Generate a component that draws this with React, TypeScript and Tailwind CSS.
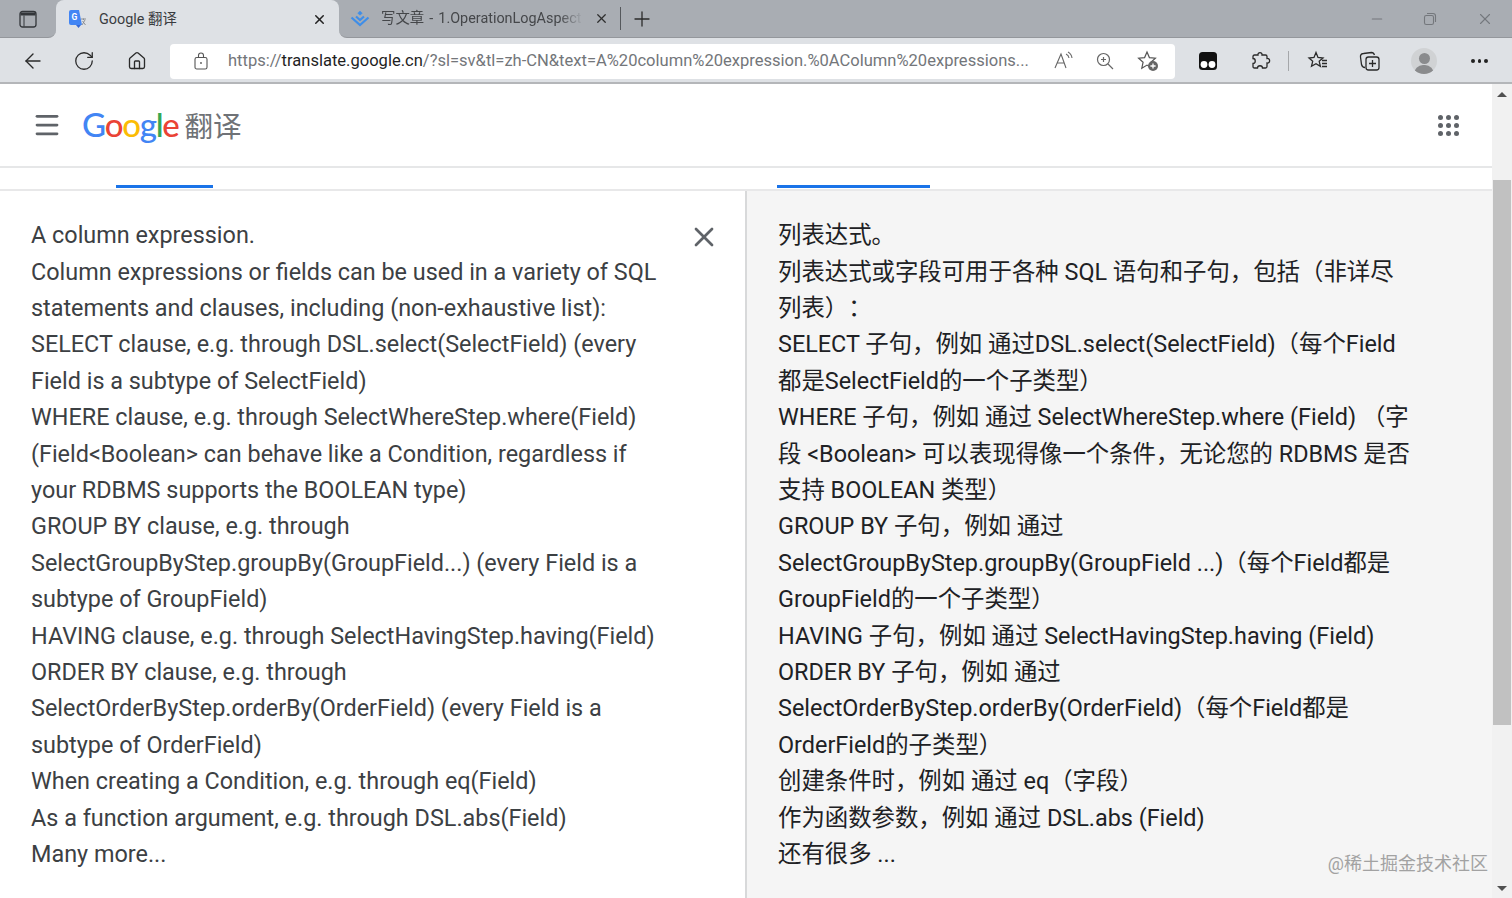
import { ArrowLeft, RotateCw, Home, X, Plus, Minus, Menu } from 'lucide-react';

const sourceLines = [
    'A column expression.',
    'Column expressions or fields can be used in a variety of SQL',
    'statements and clauses, including (non-exhaustive list):',
    'SELECT clause, e.g. through DSL.select(SelectField) (every',
    'Field is a subtype of SelectField)',
    'WHERE clause, e.g. through SelectWhereStep.where(Field)',
    '(Field<Boolean> can behave like a Condition, regardless if',
    'your RDBMS supports the BOOLEAN type)',
    'GROUP BY clause, e.g. through',
    'SelectGroupByStep.groupBy(GroupField...) (every Field is a',
    'subtype of GroupField)',
    'HAVING clause, e.g. through SelectHavingStep.having(Field)',
    'ORDER BY clause, e.g. through',
    'SelectOrderByStep.orderBy(OrderField) (every Field is a',
    'subtype of OrderField)',
    'When creating a Condition, e.g. through eq(Field)',
    'As a function argument, e.g. through DSL.abs(Field)',
    'Many more...',
];

const targetLines = [
    '列表达式。',
    '列表达式或字段可用于各种 SQL 语句和子句，包括（非详尽',
    '列表）：',
    'SELECT 子句，例如 通过DSL.select(SelectField)（每个Field',
    '都是SelectField的一个子类型）',
    'WHERE 子句，例如 通过 SelectWhereStep.where (Field) （字',
    '段 <Boolean> 可以表现得像一个条件，无论您的 RDBMS 是否',
    '支持 BOOLEAN 类型）',
    'GROUP BY 子句，例如 通过',
    'SelectGroupByStep.groupBy(GroupField ...)（每个Field都是',
    'GroupField的一个子类型）',
    'HAVING 子句，例如 通过 SelectHavingStep.having (Field)',
    'ORDER BY 子句，例如 通过',
    'SelectOrderByStep.orderBy(OrderField)（每个Field都是',
    'OrderField的子类型）',
    '创建条件时，例如 通过 eq（字段）',
    '作为函数参数，例如 通过 DSL.abs (Field)',
    '还有很多 ...',
];

function TabStrip() {
    return (
        <div className="flex h-[38px] bg-[#dee1e5] shrink-0">
            <div className="flex h-full w-[56px] items-center justify-center rounded-br-lg border-b border-[#94979c] bg-[#a9adb3]">
                <svg width="18" height="18" viewBox="0 0 18 18" fill="none" stroke="#33363a" strokeWidth="1.300">
                    <rect x="1" y="1.500" width="16" height="15.500" rx="2.500" />
                    <path d="M1.500 4h15" strokeWidth="3" />
                    <path d="M5 5.500v11" strokeWidth="1" />
                </svg>
            </div>

            {/* Active tab */}
            <div className="h-full w-[283px] bg-[#a9adb3]">
                <div className="flex h-full items-center rounded-t-lg bg-[#dee1e5] pl-[13px] pr-[12px] pt-px">
                    <svg width="18" height="20" viewBox="0 0 18 20" className="shrink-0">
                        <path d="M0 2a2 2 0 0 1 2-2h8l3 15H2a2 2 0 0 1-2-2z" fill="#4285f4" />
                        <path d="M7 15h5l-2.500 3z" fill="#3367d6" />
                        <text x="2.500" y="10" fontSize="8.500" fontWeight="700" fill="#fff">G</text>
                        <path d="M12 9h5M14.500 8.500v1.500M13 15l3-5M13.500 11l3 4" stroke="#85888d" strokeWidth="0.900" fill="none" />
                    </svg>
                    <span className="ml-[12px] text-[14.400px] text-[#3a3c3f]">Google 翻译</span>
                    <X size={15} strokeWidth={2.400} className="ml-auto text-[#222]" />
                </div>
            </div>

            {/* Inactive tab */}
            <div className="flex h-full flex-1 items-center rounded-bl-lg border-b border-[#94979c] bg-[#a9adb3]">
                <div className="flex w-[281px] items-center pl-[11px] pr-[11px] pt-px">
                    <svg width="20" height="18" viewBox="0 0 20 18" fill="none" stroke="#3f8ee8" strokeWidth="2.200" className="shrink-0">
                        <path d="M1.500 7.500L10 15l8.500-7.500" />
                        <path d="M6 6.500l4 3.500 4-3.500" />
                        <path d="M10 1l2.300 2.200L10 5.200 7.700 3.200z" fill="#3f8ee8" strokeWidth="0.500" />
                    </svg>
                    <span className="ml-[11px] w-[202px] overflow-hidden whitespace-nowrap text-[14.400px] text-[#45474a] [word-spacing:1.500px] [mask-image:linear-gradient(to_right,black_88%,transparent)]">写文章 - 1.OperationLogAspect</span>
                    <X size={15} strokeWidth={2} className="ml-auto text-[#2e2e2e]" />
                </div>
                <div className="h-[23px] w-px bg-[#55585c]" />
                <div className="flex w-[42px] items-center justify-center">
                    <Plus size={24} strokeWidth={1.300} className="text-[#2b2b2b]" />
                </div>

                {/* Window controls */}
                <div className="ml-auto flex items-center text-[#74777c]">
                    <Minus size={16} strokeWidth={1.800} className="mr-[38px]" />
                    <svg width="14" height="14" viewBox="0 0 14 14" fill="none" stroke="#74777c" strokeWidth="1.100" className="mr-[39px]">
                        <rect x="1.500" y="3.500" width="9" height="9" rx="1.800" />
                        <path d="M4 1.500h6a2.500 2.500 0 0 1 2.500 2.500v6" />
                    </svg>
                    <X size={18} strokeWidth={1.500} className="mr-[18px]" />
                </div>
            </div>
        </div>
    );
}

function Toolbar() {
    return (
        <div className="flex h-[46px] items-center border-b-2 border-[#b4b6b9] bg-[#dee1e5] pt-[2px] shrink-0">
            <div className="flex w-[170px] items-center text-[#2a2a2a]">
                <ArrowLeft size={24} strokeWidth={1.400} className="ml-[21px]" />
                <RotateCw size={22} strokeWidth={1.400} className="ml-[28px]" />
                <Home size={20} strokeWidth={1.600} className="ml-[32px]" />
            </div>
            <div className="flex h-[35px] w-[1005px] items-center rounded bg-white pl-[24px] pr-[16px]">
                <svg width="14" height="18" viewBox="0 0 14 18" fill="none" stroke="#555" strokeWidth="1.100" className="shrink-0">
                    <rect x="1" y="5.500" width="12" height="11.500" rx="1.800" />
                    <path d="M4.500 5.500V3.500a2.500 2.500 0 0 1 5 0v2" />
                    <circle cx="7" cy="11" r="0.900" fill="#555" stroke="none" />
                </svg>
                <span className="ml-[20px] w-[806px] overflow-hidden whitespace-nowrap text-[16.550px] text-[#73767a]">
                    https://<span className="text-[#1f1f1f]">translate.google.cn</span>/?sl=sv&amp;tl=zh-CN&amp;text=A%20column%20expression.%0AColumn%20expressions...
                </span>
                <span className="ml-auto flex items-center text-[#555]">
                    <svg width="20" height="20" viewBox="0 0 20 20" fill="none" stroke="#666" strokeWidth="1.100">
                        <path d="M1 17L7 3l5 14M3.500 12h7" />
                        <path d="M12 3a5 5 0 0 1 3 4M14 1a8 8 0 0 1 4 6" />
                    </svg>
                    <svg width="18" height="18" viewBox="0 0 18 18" fill="none" stroke="#666" strokeWidth="1.200" className="ml-[22px]">
                        <circle cx="7.500" cy="7.500" r="6" />
                        <path d="M12 12l5 5M7.500 5v5M5 7.500h5" />
                    </svg>
                    <svg width="22" height="22" viewBox="0 0 22 22" className="ml-[23px]">
                        <path d="M10 2l2.400 5.600 6 .6-4.500 4 1.300 6-5.200-3.100-5.200 3.100 1.300-6-4.500-4 6-.6z" fill="none" stroke="#555" strokeWidth="1.200" />
                        <circle cx="16" cy="16" r="5" fill="#666" />
                        <path d="M16 13.400v5.200M13.400 16h5.200" stroke="#fff" strokeWidth="1.300" />
                    </svg>
                </span>
            </div>
            <div className="flex flex-1 items-center">
                <svg width="20" height="20" viewBox="0 0 20 20" className="ml-[23px]">
                    <rect x="1" y="1" width="18" height="18" rx="3.500" fill="#111" />
                    <circle cx="6" cy="13.500" r="3.400" fill="#fff" />
                    <circle cx="14" cy="13.500" r="3.400" fill="#fff" />
                </svg>
                <svg width="22" height="22" viewBox="0 0 22 22" fill="none" stroke="#2a2a2a" strokeWidth="1.300" className="ml-[31px]">
                    <path d="M9 5C8.500 1.800 13.500 1.800 13 5L16.500 5Q18 5 18 6.500L18 8.500C21.500 8 21.500 13.500 18 13L18 16.500Q18 18 16.500 18L13.500 18C13.500 15 8.500 15 8.500 18L5.500 18Q4 18 4 16.500L4 13.500C7 13.500 7 8.500 4 8.500L4 6.500Q4 5 5.500 5Z" />
                </svg>
                <div className="ml-[17px] h-[20px] w-px bg-[#a5a7aa]" />
                <svg width="22" height="22" viewBox="0 0 22 22" fill="none" stroke="#2a2a2a" strokeWidth="1.300" className="ml-[18px]">
                    <path d="M9 2.500l2 5 5 .5-3.800 3.300 1.200 5-4.400-2.600L4.500 16.300l1.200-5L2 8l5-.5z" />
                    <path d="M15 10.500h5M15 13.500h5M15 16.500h5" />
                </svg>
                <svg width="22" height="22" viewBox="0 0 22 22" fill="none" stroke="#2a2a2a" strokeWidth="1.300" className="ml-[30px]">
                    <path d="M6 17.500c-2 0-3-1-3.500-3L1.500 7c-.3-2 1-3.500 3-3.500l8-1c1.500 0 2.500 1 3 2.500" />
                    <rect x="7" y="7" width="13" height="13" rx="2.500" />
                    <path d="M13.500 10v7M10 13.500h7" />
                </svg>
                <div className="ml-[30px] flex h-[26px] w-[26px] flex-col items-center justify-end overflow-hidden rounded-full bg-[#d0d2d4]">
                    <div className="h-[11px] w-[11px] rounded-full bg-[#8a8b8d]" />
                    <div className="mt-[1px] h-[9px] w-[20px] rounded-t-full bg-[#8a8b8d]" />
                </div>
                <div className="ml-[34px] flex gap-[3px]">
                    <div className="h-[3.500px] w-[3.500px] rounded-full bg-[#222]" />
                    <div className="h-[3.500px] w-[3.500px] rounded-full bg-[#222]" />
                    <div className="h-[3.500px] w-[3.500px] rounded-full bg-[#222]" />
                </div>
            </div>
        </div>
    );
}

function PageHeader() {
    return (
        <div className="flex h-[84px] items-center border-b-2 border-[#e6e7e8] bg-white shrink-0">
            <Menu size={30} strokeWidth={2.200} className="ml-[32px] text-[#5f6368]" />
            <div className="mb-[2px] ml-[20px] flex items-baseline font-['Lato','Liberation_Sans',sans-serif] text-[33px] font-medium leading-none tracking-[-1.300px]">
                <span className="text-[#4285f4]">G</span>
                <span className="text-[#ea4335]">o</span>
                <span className="text-[#fbbc05]">o</span>
                <span className="text-[#4285f4]">g</span>
                <span className="text-[#34a853]">l</span>
                <span className="text-[#ea4335]">e</span>
                <span className="ml-[6px] font-['Noto_Sans_CJK_SC',sans-serif] text-[28.500px] font-normal tracking-normal text-[#6f7276]">翻译</span>
            </div>
            <div className="ml-auto mr-[33px] grid grid-cols-3 gap-[3px]">
                {Array.from({ length: 9 }).map((_, i) => (
                    <div key={i} className="h-[5px] w-[5px] rounded-full bg-[#5f6368]" />
                ))}
            </div>
        </div>
    );
}

function LangTabs() {
    return (
        <div className="flex h-[23px] items-end border-b-2 border-[#e8e8e9] bg-white pb-px shrink-0">
            <div className="ml-[116px] h-[3px] w-[97px] bg-[#1a73e8]" />
            <div className="ml-[564px] h-[3px] w-[153px] bg-[#1a73e8]" />
        </div>
    );
}

export default function App() {
    return (
        <div className="flex h-[898px] w-[1512px] flex-col overflow-hidden bg-white font-['Roboto','Noto_Sans_CJK_SC',sans-serif]">
            <TabStrip />
            <Toolbar />
            <div className="flex min-h-0 flex-1">
                <div className="flex min-w-0 flex-1 flex-col">
                    <PageHeader />
                    <LangTabs />
                    <div className="flex min-h-0 flex-1">
                        {/* Source panel */}
                        <div className="relative w-[745px] shrink-0 pl-[31px] pt-[26.150px] text-[23.400px] leading-[36.400px] text-[#3c4043]">
                            {sourceLines.map((line) => (
                                <div key={line} className="whitespace-nowrap">{line}</div>
                            ))}
                            <X size={32} strokeWidth={2} className="absolute right-[25px] top-[30px] text-[#5f6368]" />
                        </div>
                        {/* Translation panel */}
                        <div className="relative flex-1 border-l-2 border-[#d8d9da] bg-[#f5f5f5] pl-[31px] pt-[26.150px] text-[23.400px] leading-[36.400px] text-[#202124] [text-spacing-trim:space-all]">
                            {targetLines.map((line) => (
                                <div key={line} className="whitespace-nowrap">{line}</div>
                            ))}
                            <span className="absolute bottom-[25px] right-[4px] text-[18px] leading-none text-[#a2a2a2]">@稀土掘金技术社区</span>
                        </div>
                    </div>
                </div>

                {/* Scrollbar */}
                <div className="flex w-[20px] shrink-0 flex-col items-center bg-[#f1f1f1]">
                    <div className="mt-[8px] h-0 w-0 border-x-[5px] border-b-[5px] border-x-transparent border-b-[#505050]" />
                    <div className="mt-[83px] h-[545px] w-[18px] bg-[#c1c1c1]" />
                    <div className="mt-auto mb-[7px] h-0 w-0 border-x-[5px] border-t-[5px] border-x-transparent border-t-[#505050]" />
                </div>
            </div>
        </div>
    );
}
